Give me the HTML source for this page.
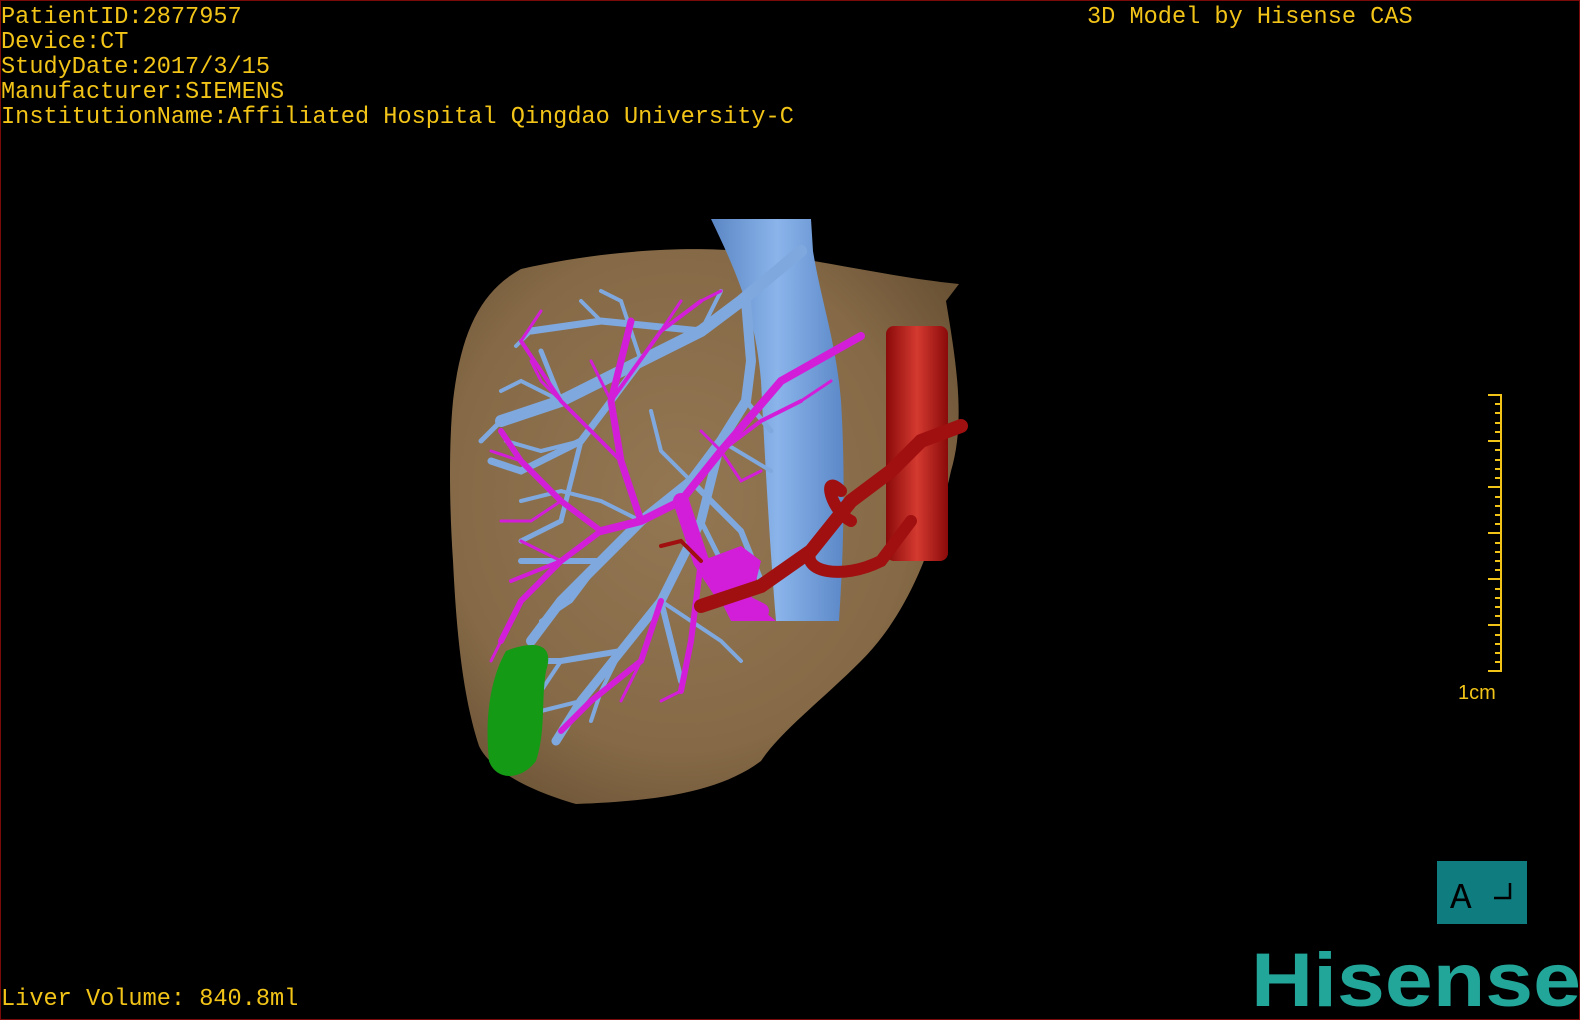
<!DOCTYPE html>
<html><head><meta charset="utf-8"><style>
html,body{margin:0;padding:0;background:#000;}
#s{position:relative;width:1580px;height:1020px;background:#000;overflow:hidden;box-sizing:border-box;border:1px solid #7a0a0a;}
.t{position:absolute;font-family:"Liberation Mono",monospace;font-size:23.6px;color:#f2c418;white-space:pre;line-height:25px;}
</style></head><body><div id="s">
<svg width="1580" height="1020" style="position:absolute;left:0;top:0">
<defs>
<radialGradient id="lv" cx="0.45" cy="0.45" r="0.65"><stop offset="0" stop-color="#937652"/><stop offset="0.7" stop-color="#866a47"/><stop offset="1" stop-color="#6a5235"/></radialGradient>
<linearGradient id="ivc" x1="0" x2="1"><stop offset="0" stop-color="#5a86c4"/><stop offset="0.5" stop-color="#8ab4ea"/><stop offset="1" stop-color="#5c88c8"/></linearGradient>
<linearGradient id="ao" x1="0" x2="1"><stop offset="0" stop-color="#8a0a0a"/><stop offset="0.5" stop-color="#d43a30"/><stop offset="1" stop-color="#8a0a0a"/></linearGradient>
</defs>
<path d="M520 268 C600 250 680 245 740 250 C820 258 880 275 958 283 L945 300 C955 360 965 420 950 470 C930 560 900 620 860 660 C820 700 780 730 760 760 C720 790 660 800 575 803 C530 790 490 770 478 745 C460 690 455 620 452 560 C448 500 448 440 452 400 C460 330 480 290 520 268 Z" fill="url(#lv)"/>
<path d="M710 218 L810 218 L812 250 C820 300 835 340 840 400 C845 480 842 560 838 620 L775 620 C770 560 765 480 760 380 C755 320 740 280 710 218 Z" fill="url(#ivc)"/>
<g stroke="#7fa8de" stroke-linecap="round" fill="none">
<path d="M800 250 L740 300 L700 330 L640 360 L560 400 L500 420" stroke-width="12"/>
<path d="M745 300 L750 360 L745 400 L720 440 L690 480 L640 520 L600 560 L560 600 L530 640" stroke-width="10"/>
<path d="M700 330 L600 320 L530 330" stroke-width="7"/>
<path d="M640 360 L580 440 L520 470 L490 460" stroke-width="7"/>
<path d="M720 440 L700 520 L660 600 L620 650 L580 700 L555 740" stroke-width="9"/>
<path d="M660 600 L680 680 M620 650 L560 660 L510 660 M600 560 L520 560 M690 480 L740 530 L760 580" stroke-width="6"/>
<path d="M560 400 L540 350 M500 420 L480 440 M580 440 L560 520 L520 540 M700 520 L740 600 M745 400 L770 430" stroke-width="5"/>
<path d="M600 320 L580 300 M640 360 L620 300 L600 290 M560 400 L520 380 L500 390 M530 330 L515 345 M580 440 L540 450 L505 440 M600 560 L570 600 L540 620 M640 520 L600 500 L560 490 L520 500 M620 650 L600 690 L590 720 M660 600 L720 640 L740 660 M690 480 L660 450 L650 410 M700 330 L720 290 M720 440 L770 470 M580 700 L540 710 M560 660 L540 690" stroke-width="4"/>
</g>
<g stroke="#d21ed8" stroke-linecap="round" fill="none">
<path d="M860 335 L780 380 L720 450 L680 500 L640 520 L600 530" stroke-width="8"/>
<path d="M680 500 L700 560 L720 590 L760 610" stroke-width="16"/>
<path d="M640 520 L620 460 L610 400 L630 320" stroke-width="7"/>
<path d="M600 530 L560 500 L520 460 L500 430 M600 530 L560 560 L520 600 L500 640" stroke-width="6"/>
<path d="M660 600 L640 660 L590 700 L560 730 M700 560 L690 640 L680 690" stroke-width="6"/>
<path d="M620 460 L560 400 L520 340 M610 400 L660 330 L700 300 M720 450 L760 420 L800 400 M560 560 L510 580" stroke-width="4"/>
<path d="M520 460 L490 450 M560 500 L530 520 L500 520 M520 340 L540 310 M660 330 L680 300 M700 300 L720 290 M560 400 L540 380 L530 360 M610 400 L590 360 M720 450 L740 480 L760 470 M640 660 L620 700 M680 690 L660 700 M560 560 L520 540 M500 640 L490 660 M800 400 L830 380 M720 450 L700 430" stroke-width="3"/>
</g>
<path d="M700 560 L740 545 L760 560 L750 600 L775 620 L730 620 Z" fill="#d21ed8"/>
<rect x="885" y="325" width="62" height="235" rx="8" fill="url(#ao)"/>
<g stroke="#a01010" stroke-linecap="round" fill="none">
<path d="M700 605 L760 585 L810 550 L850 500 L890 470 L920 440 L960 425" stroke-width="14"/>
<path d="M840 490 C820 470 830 510 850 520 M810 550 C800 570 840 580 880 560 L910 520" stroke-width="12"/>
<path d="M700 560 L680 540 L660 545" stroke-width="4"/>
</g>
<path d="M505 650 C530 640 555 640 545 670 C540 700 545 730 535 760 C520 780 495 780 488 760 C484 720 488 680 505 650 Z" fill="#149a14"/>
<line x1="1500" y1="393" x2="1500" y2="671" stroke="#f2c418" stroke-width="2"/>
<g stroke="#f2c418" stroke-width="2">
<line x1="1487" y1="394" x2="1500" y2="394"/><line x1="1494" y1="403" x2="1500" y2="403"/><line x1="1494" y1="412" x2="1500" y2="412"/><line x1="1494" y1="422" x2="1500" y2="422"/><line x1="1494" y1="431" x2="1500" y2="431"/>
<line x1="1487" y1="440" x2="1500" y2="440"/><line x1="1494" y1="449" x2="1500" y2="449"/><line x1="1494" y1="459" x2="1500" y2="459"/><line x1="1494" y1="468" x2="1500" y2="468"/><line x1="1494" y1="477" x2="1500" y2="477"/>
<line x1="1487" y1="486" x2="1500" y2="486"/><line x1="1494" y1="496" x2="1500" y2="496"/><line x1="1494" y1="505" x2="1500" y2="505"/><line x1="1494" y1="514" x2="1500" y2="514"/><line x1="1494" y1="523" x2="1500" y2="523"/>
<line x1="1487" y1="532" x2="1500" y2="532"/><line x1="1494" y1="542" x2="1500" y2="542"/><line x1="1494" y1="551" x2="1500" y2="551"/><line x1="1494" y1="560" x2="1500" y2="560"/><line x1="1494" y1="569" x2="1500" y2="569"/>
<line x1="1487" y1="578" x2="1500" y2="578"/><line x1="1494" y1="588" x2="1500" y2="588"/><line x1="1494" y1="597" x2="1500" y2="597"/><line x1="1494" y1="606" x2="1500" y2="606"/><line x1="1494" y1="615" x2="1500" y2="615"/>
<line x1="1487" y1="624" x2="1500" y2="624"/><line x1="1494" y1="634" x2="1500" y2="634"/><line x1="1494" y1="643" x2="1500" y2="643"/><line x1="1494" y1="652" x2="1500" y2="652"/><line x1="1494" y1="661" x2="1500" y2="661"/>
<line x1="1487" y1="670" x2="1500" y2="670"/>
</g>
<text x="1457" y="698" font-family="Liberation Sans,sans-serif" font-size="20" fill="#f2c418">1cm</text>
<rect x="1436" y="860" width="90" height="63" fill="#0f7c80"/>
<text x="1449" y="907" font-family="Liberation Mono,monospace" font-size="36" fill="#000">A</text>
<path d="M1493 897 L1509 897 L1509 882" stroke="#000" stroke-width="2.5" fill="none"/>
<text x="1250" y="1005" font-family="Liberation Sans,sans-serif" font-weight="bold" font-size="76" fill="#22a699" textLength="330" lengthAdjust="spacingAndGlyphs">Hisense</text>
</svg>
<div class="t" style="left:0;top:4px">PatientID:2877957
Device:CT
StudyDate:2017/3/15
Manufacturer:SIEMENS
InstitutionName:Affiliated Hospital Qingdao University-C</div>
<div class="t" style="left:1086px;top:4px">3D Model by Hisense CAS</div>
<div class="t" style="left:0;top:986px">Liver Volume: 840.8ml</div>
</div></body></html>
